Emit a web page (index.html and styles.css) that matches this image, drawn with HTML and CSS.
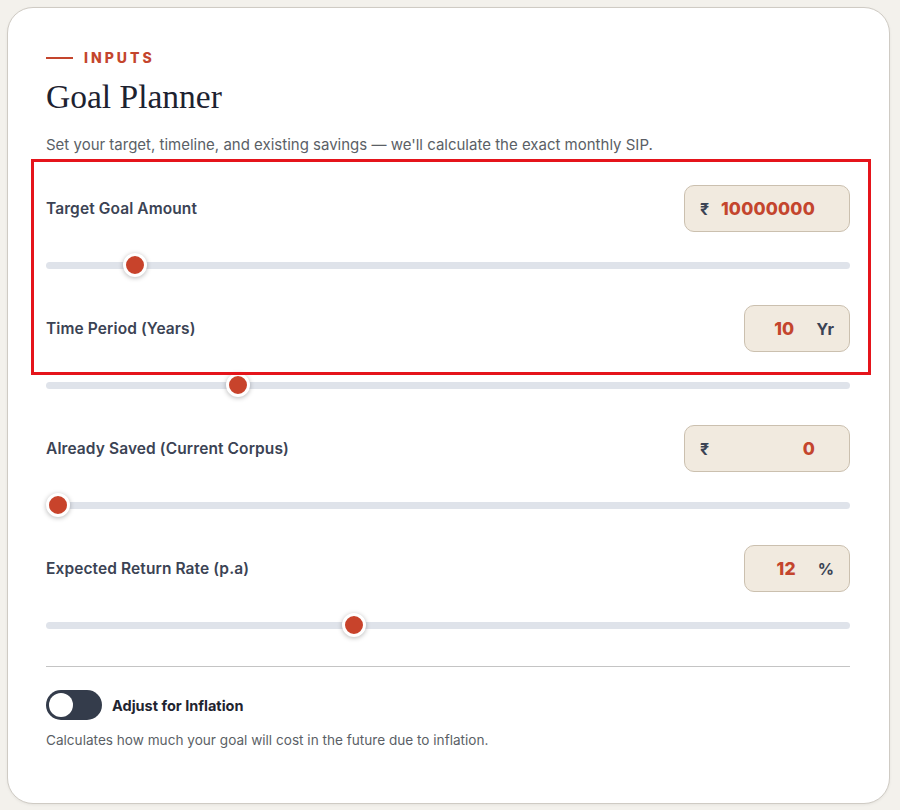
FILE: index.html
```html
<!DOCTYPE html>
<html lang="en">
<head>
<meta charset="utf-8">
<title>Goal Planner</title>
<link rel="stylesheet" href="styles.css">
</head>
<body>
<div class="page">
  <section class="card">
    <div class="eyebrow"><span class="eyebrow-line"></span><span class="eyebrow-text">INPUTS</span></div>
    <h1 class="title">Goal Planner</h1>
    <p class="subtitle">Set your target, timeline, and existing savings — we'll calculate the exact monthly SIP.</p>

    <div class="fields">
      <div class="field">
        <div class="field-head">
          <span class="label">Target Goal Amount</span>
          <div class="valbox valbox-money">
            <span class="affix">₹</span>
            <span class="value">10000000</span>
          </div>
        </div>
        <input class="slider" type="range" min="100000" max="100000000" step="100000" value="10000000">
      </div>

      <div class="field">
        <div class="field-head">
          <span class="label">Time Period (Years)</span>
          <div class="valbox valbox-unit">
            <span class="value">10</span>
            <span class="affix">Yr</span>
          </div>
        </div>
        <input class="slider" type="range" min="1" max="40" step="1" value="10">
      </div>

      <div class="field">
        <div class="field-head">
          <span class="label">Already Saved (Current Corpus)</span>
          <div class="valbox valbox-money">
            <span class="affix">₹</span>
            <span class="value">0</span>
          </div>
        </div>
        <input class="slider" type="range" min="0" max="10000000" step="10000" value="0">
      </div>

      <div class="field">
        <div class="field-head">
          <span class="label">Expected Return Rate (p.a)</span>
          <div class="valbox valbox-unit">
            <span class="value">12</span>
            <span class="affix">%</span>
          </div>
        </div>
        <input class="slider" type="range" min="1" max="30" step="1" value="12">
      </div>
    </div>

    <hr class="divider">

    <div class="toggle-row">
      <span class="toggle"><span class="knob"></span></span>
      <span class="toggle-label">Adjust for Inflation</span>
    </div>
    <p class="caption">Calculates how much your goal will cost in the future due to inflation.</p>

    <div class="highlight"></div>
  </section>
</div>
</body>
</html>
```

FILE: styles.css
```css
* { box-sizing: border-box; }

html, body {
  margin: 0;
  padding: 0;
  background: #f3f1ec;
}

body {
  font-family: Inter, "Noto Sans", Arial, sans-serif;
  color: #3b4354;
}

.page {
  padding: 7px 10px 7px 7px;
}

.card {
  position: relative;
  width: 883px;
  height: 797px;
  background: #ffffff;
  border: 1px solid #cfcbc4;
  border-radius: 26px;
  padding: 42px 39px 0 38px;
  box-shadow: 0 1px 3px rgba(0, 0, 0, 0.06);
}

.eyebrow {
  display: flex;
  align-items: center;
  gap: 11px;
  height: 16px;
}

.eyebrow-line {
  width: 27px;
  height: 2px;
  background: #c4452d;
}

.eyebrow-text {
  font-size: 14px;
  font-weight: 800;
  letter-spacing: 3px;
  color: #c4452d;
  line-height: 16px;
}

.title {
  margin: 11px 0 0;
  font-family: "Liberation Serif", "Times New Roman", serif;
  font-size: 33.5px;
  font-weight: 400;
  line-height: 40px;
  color: #1d2230;
}

.subtitle {
  margin: 18px 0 0;
  font-size: 15px;
  line-height: 20px;
  color: #5b5f66;
}

.fields {
  margin-top: 30px;
  display: flex;
  flex-direction: column;
  gap: 28px;
}

.field {
  display: flex;
  flex-direction: column;
  gap: 21px;
}

.field-head {
  display: flex;
  align-items: center;
  justify-content: space-between;
  height: 47px;
}

.label {
  font-size: 15.5px;
  font-weight: 600;
  color: #3b4354;
  letter-spacing: 0.1px;
}

.valbox {
  height: 47px;
  display: flex;
  align-items: center;
  background: #f1eadf;
  border: 1px solid #cbc0af;
  border-radius: 10px;
}

.valbox-money {
  width: 166px;
  padding: 0 34px 0 15px;
}

.valbox-money .value {
  flex: 1;
  text-align: right;
}

.valbox-unit {
  width: 106px;
  padding: 0 15px 0 10px;
  gap: 22px;
}

.valbox-unit .value {
  flex: 1;
  text-align: right;
}

.affix {
  font-size: 16px;
  font-weight: 700;
  color: #3b4354;
}

.value {
  font-size: 17.5px;
  font-weight: 800;
  color: #c4452d;
  letter-spacing: 0.2px;
}

.slider {
  -webkit-appearance: none;
  appearance: none;
  display: block;
  width: 100%;
  height: 24px;
  margin: 0;
  padding: 0;
  background: transparent;
}

.slider::-webkit-slider-runnable-track {
  height: 7px;
  background: #dfe3ea;
  border-radius: 4px;
}

.slider::-webkit-slider-thumb {
  -webkit-appearance: none;
  appearance: none;
  width: 24px;
  height: 24px;
  margin-top: -8.5px;
  border-radius: 50%;
  background: #c8432b;
  border: 3px solid #ffffff;
  box-shadow: 0 1px 5px rgba(0, 0, 0, 0.28);
}

.slider::-moz-range-track {
  height: 7px;
  background: #dfe3ea;
  border-radius: 4px;
}

.slider::-moz-range-thumb {
  width: 18px;
  height: 18px;
  border-radius: 50%;
  background: #c8432b;
  border: 3px solid #ffffff;
  box-shadow: 0 1px 5px rgba(0, 0, 0, 0.28);
}

.divider {
  margin: 29px 0 0;
  border: 0;
  height: 1px;
  background: #c4c4c4;
}

.toggle-row {
  margin-top: 23px;
  display: flex;
  align-items: center;
  gap: 10px;
}

.toggle {
  width: 56px;
  height: 30px;
  border-radius: 15px;
  background: #343c4b;
  padding: 3px;
  display: flex;
  align-items: center;
}

.knob {
  width: 24px;
  height: 24px;
  border-radius: 50%;
  background: #ffffff;
}

.toggle-label {
  font-size: 14.5px;
  font-weight: 700;
  color: #1f2430;
}

.caption {
  margin: 10px 0 0;
  font-size: 13.6px;
  line-height: 20px;
  color: #5b5f66;
}

.highlight {
  position: absolute;
  left: 23px;
  top: 151px;
  width: 840px;
  height: 216px;
  border: 3px solid #e5141b;
  pointer-events: none;
}
```
